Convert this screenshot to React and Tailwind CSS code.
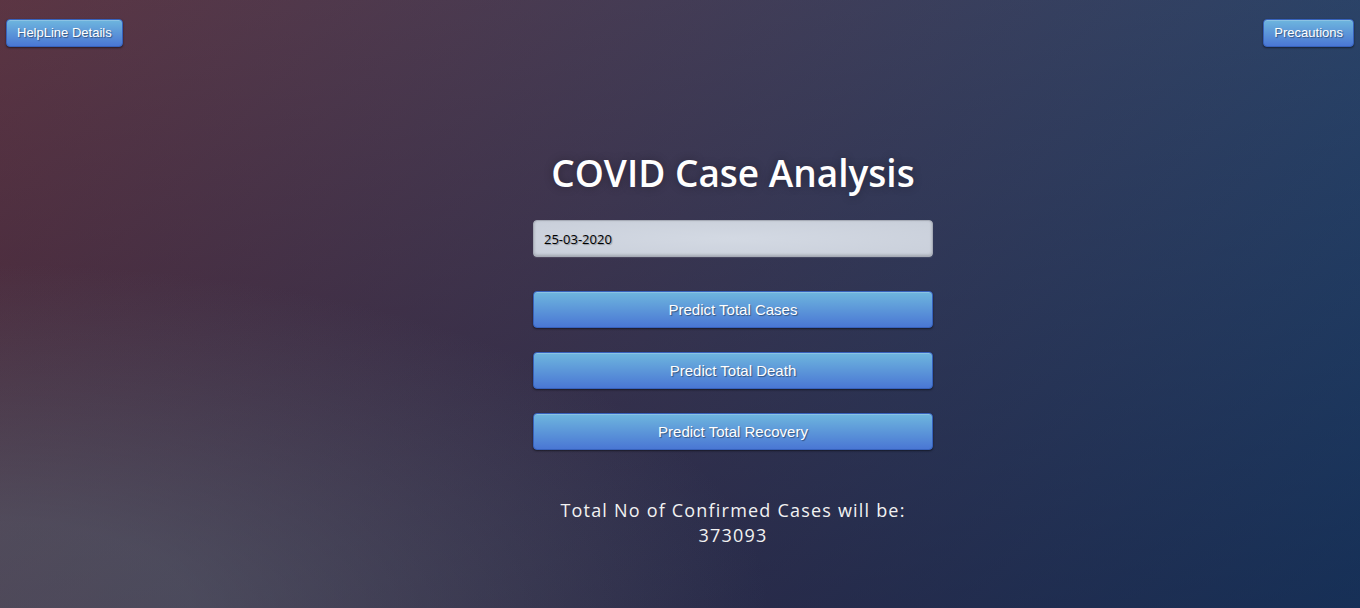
import React, { useState } from "react";

const btn =
  "rounded-[4px] border border-[#3762bc] bg-[#4a77d4] bg-[linear-gradient(to_bottom,#6eb6de,#4a77d4)] text-white [text-shadow:1px_1px_1px_rgba(0,0,0,0.4)] shadow-[inset_0_1px_0_rgba(255,255,255,0.2),0_1px_2px_rgba(0,0,0,0.5)] font-['Liberation_Sans',Arial,sans-serif]";

export default function App() {
  const [date, setDate] = useState("25-03-2020");

  return (
    <div className="h-[608px] w-full overflow-hidden bg-[#092756] bg-[radial-gradient(ellipse_at_0%_100%,rgba(104,128,138,.4)_10%,rgba(138,114,76,0)_40%),linear-gradient(to_bottom,rgba(57,173,219,.25)_0%,rgba(42,60,87,.4)_100%),linear-gradient(135deg,#670d10_0%,#092756_100%)]">
      <div className="flex justify-between px-[6px] pt-[19px]">
        <button className={`${btn} h-[28px] px-[10px] text-[13px] leading-[18px]`}>
          HelpLine Details
        </button>
        <button className={`${btn} h-[28px] px-[10px] text-[13px] leading-[18px]`}>
          Precautions
        </button>
      </div>

      <div className="flex justify-center pl-[106px]">
        <div className="flex w-[400px] flex-col items-center pt-[102px]">
          <h1 className="font-['Open_Sans',sans-serif] text-[37px] font-semibold leading-[48px] text-white [text-shadow:0_0_10px_rgba(0,0,0,0.3)]">
            COVID Case Analysis
          </h1>

          <input
            autoFocus
            value={date}
            onChange={(e) => setDate(e.target.value)}
            className="mt-[23px] h-[37px] w-full rounded-[4px] border border-[#a6abb6] bg-[#cfd5df] bg-[radial-gradient(ellipse_at_center,#d3d9e3_0%,#c9cfda_100%)] px-[10px] font-['Open_Sans',sans-serif] text-[13px] text-black caret-black outline-none shadow-[inset_0_-1px_3px_rgba(0,0,0,0.2),0_1px_1px_rgba(255,255,255,0.1)] [text-shadow:1px_1px_1px_rgba(0,0,0,0.3)]"
          />

          <div className="mt-[34px] flex w-full flex-col gap-[24px]">
            <button className={`${btn} h-[37px] w-full pt-[2px] text-[15px]`}>
              Predict Total Cases
            </button>
            <button className={`${btn} h-[37px] w-full pt-[2px] text-[15px]`}>
              Predict Total Death
            </button>
            <button className={`${btn} h-[37px] w-full pt-[2px] text-[15px]`}>
              Predict Total Recovery
            </button>
          </div>

          <p className="mt-[48px] text-center font-['Open_Sans',sans-serif] text-[18px] leading-[25px] tracking-[1.2px] text-[#f2f2f2]">
            Total No of Confirmed Cases will be:
            <br />
            373093
          </p>
        </div>
      </div>
    </div>
  );
}
